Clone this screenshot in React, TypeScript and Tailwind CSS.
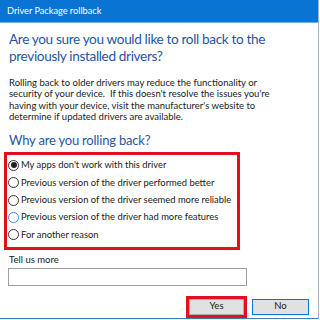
import * as React from "react"

const reasons = [
  "My apps don't work with this driver",
  "Previous version of the driver performed better",
  "Previous version of the driver seemed more reliable",
  "Previous version of the driver had more features",
  "For another reason",
]

function Radio({ checked, hover }: { checked?: boolean; hover?: boolean }) {
  return (
    <span
      className={
        "flex h-[11px] w-[11px] shrink-0 items-center justify-center rounded-full border bg-white " +
        (hover ? "border-[#3c8ee0]" : "border-[#333333]")
      }
    >
      {checked && <span className="h-[6px] w-[6px] rounded-full bg-[#222222]" />}
    </span>
  )
}

export default function App() {
  const [selected, setSelected] = React.useState(0)

  return (
    <div className="h-[320px] w-[320px] overflow-hidden bg-white font-['Lato',sans-serif]">
      <div className="flex h-[319px] w-[319px] flex-col border-r border-b border-r-[#9fb7cc] border-b-[#3d7db5]">
        {/* Title bar */}
        <div className="flex h-[23px] items-center border-b border-[#6fb2ea] bg-[#0a74d4] pl-[7px] text-[9.2px] text-white">
          Driver Package rollback
        </div>

        <div className="flex flex-1 flex-col px-[9px]">
          <h1 className="mt-[8px] w-[264px] text-[13.6px] leading-[17px] tracking-[-0.35px] text-[#1f56a3]">
            Are you sure you would like to roll back to the previously installed drivers?
          </h1>

          <p className="mt-[12px] w-[264px] text-[9.5px] leading-[11.4px] text-[#1a1a1a]">
            Rolling back to older drivers may reduce the functionality or security of your device.&nbsp; If this doesn't resolve the issues you're having with your device, visit the manufacturer's website to determine if updated drivers are available.
          </p>

          <h2 className="mt-[9px] text-[13px] leading-[16px] tracking-[-0.2px] text-[#1f56a3]">Why are you rolling back?</h2>

          {/* Reasons */}
          <div className="-ml-[5px] mt-[4px] flex w-[236px] flex-col border-[3px] border-[#e2101e] pb-[3px] pl-[1px] pt-[2px]">
            {reasons.map((r, i) => (
              <label
                key={r}
                onClick={() => setSelected(i)}
                className="flex h-[17.4px] cursor-default items-center gap-[2px] whitespace-nowrap text-[9.4px] text-[#1a1a1a]"
              >
                <Radio checked={selected === i} hover={i === 3} />
                <span>{r}</span>
              </label>
            ))}
          </div>

          <div className="mt-[4px] text-[9.5px] leading-[12px] text-[#1a1a1a]">Tell us more</div>
          <input className="-ml-[1px] mt-[2px] h-[18px] w-[239px] border border-[#a0a0a0] bg-white outline-none" />

          {/* Buttons */}
          <div className="mt-[10px] flex justify-end gap-[5px]">
            <div className="border-[3px] border-[#e2101e]">
              <button className="flex h-[16px] w-[55px] items-center justify-center border border-[#adadad] bg-[#e1e1e1] text-[9.5px] text-[#1a1a1a]">
                Yes
              </button>
            </div>
            <button className="mt-[3px] flex h-[16px] w-[57px] items-center justify-center border border-[#0078d7] bg-[#e1e1e1] text-[9.5px] text-[#1a1a1a]">
              No
            </button>
          </div>
        </div>
      </div>
    </div>
  )
}
